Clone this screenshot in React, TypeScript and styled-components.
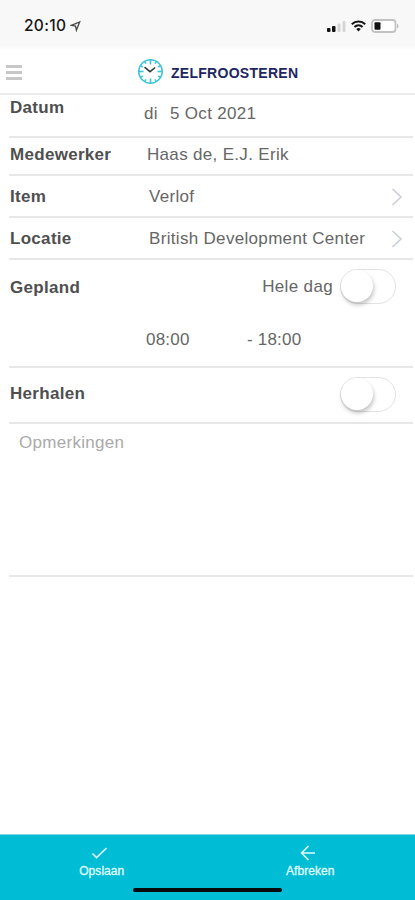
import React from "react";
import styled, { createGlobalStyle } from "styled-components";

const Global = createGlobalStyle`
  * { box-sizing: border-box; }
  body { margin: 0; background: #fff; font-family: "Liberation Sans", Arial, sans-serif; }
`;

const Screen = styled.main`
  width: 100%;
  max-width: 415px;
  height: 900px;
  display: flex;
  flex-direction: column;
  background: #fff;
  overflow: hidden;
`;

const StatusBar = styled.div`
  height: 50px;
  flex: none;
  display: flex;
  justify-content: space-between;
  align-items: center;
  padding: 1px 16px 0 24px;
  background: linear-gradient(#f8f8f8 46px, #fff);
`;

const Clock = styled.div`
  display: flex;
  align-items: center;
  gap: 4px;
  font: 500 15.5px Inter, sans-serif;
  letter-spacing: 0.3px;
  color: #151515;
`;

const Indicators = styled.div`
  display: flex;
  align-items: center;
  gap: 5px;
`;

const Header = styled.header`
  height: 45px;
  flex: none;
  display: grid;
  grid-template-columns: 130px 1fr;
  align-items: center;
  padding-left: 6px;
  border-bottom: 2px solid #ececec;
`;

const MenuButton = styled.button`
  width: 16px;
  height: 15px;
  margin-top: 1px;
  padding: 0;
  border: 0;
  background: none;
  display: flex;
  flex-direction: column;
  justify-content: space-between;
`;

const MenuLine = styled.span`
  height: 3px;
  width: 100%;
  background: #c8c8c8;
`;

const Brand = styled.div`
  display: flex;
  align-items: center;
  gap: 7px;
  padding-left: 1px;
`;

const Title = styled.h1`
  margin: 2px 0 0;
  font-size: 14px;
  line-height: 18px;
  letter-spacing: 0.28px;
  color: #20265f;
`;

const Form = styled.section`
  margin: 0 2px 0 9px;
  flex: 1;
`;

const Row = styled.div<{ $height: number; $drop?: number; $end?: number }>`
  height: ${(p) => p.$height}px;
  display: flex;
  align-items: center;
  padding: ${(p) => p.$drop ?? 0}px ${(p) => p.$end ?? 10}px 0 0;
  border-bottom: 2px solid #e7e7e7;
`;

const Label = styled.span<{ $lift?: number }>`
  width: 135px;
  flex: none;
  padding-left: 1px;
  padding-bottom: ${(p) => p.$lift ?? 0}px;
  font-size: 17px;
  line-height: 20px;
  font-weight: 700;
  letter-spacing: 0.3px;
  color: #4f4f4f;
`;

const Value = styled.span<{ $indent?: number; $lift?: number }>`
  flex: 1;
  padding-left: ${(p) => p.$indent ?? 0}px;
  padding-bottom: ${(p) => p.$lift ?? 0}px;
  font-size: 17px;
  line-height: 20px;
  letter-spacing: 0.32px;
  white-space: pre;
  color: #666;
`;

const Weekday = styled.span`
  margin-right: 2px;
`;

const Planned = styled.div`
  height: 108px;
  border-bottom: 2px solid #e7e7e7;
`;

const PlannedTop = styled.div`
  height: 55px;
  display: flex;
  align-items: center;
  padding-right: 17px;
`;

const AllDay = styled.span`
  margin: 0 7px 2px auto;
  font-size: 17px;
  line-height: 20px;
  letter-spacing: 0.35px;
  color: #666;
`;

const Times = styled.div`
  display: grid;
  grid-template-columns: 101px 1fr;
  padding: 15px 0 0 137px;
  font-size: 17px;
  line-height: 20px;
  letter-spacing: 0.2px;
  color: #666;
`;

const Toggle = styled.span`
  width: 56px;
  height: 35px;
  flex: none;
  margin: 0 0 2px auto;
  display: flex;
  border: 1.5px solid #e2e2e2;
  border-radius: 18px;
  background: #fff;
  ${AllDay} + & { margin-left: 0; }
`;

const Knob = styled.span`
  width: 32px;
  height: 32px;
  border-radius: 50%;
  background: #fff;
  box-shadow: 1px 3px 4px rgba(0, 0, 0, 0.23);
`;

const Notes = styled.div`
  height: 153px;
  padding: 9px 10px;
  border-bottom: 2px solid #e7e7e7;
  font-size: 17px;
  line-height: 20px;
  letter-spacing: 0.3px;
  color: #aaa;
`;

const Footer = styled.footer`
  height: 66px;
  flex: none;
  display: grid;
  grid-template-columns: 1fr 1fr;
  grid-template-rows: 53px 5px;
  border-top: 1px solid #7edce7;
  background: #00bdd5;
`;

const Action = styled.button<{ $trim: number }>`
  display: flex;
  flex-direction: column;
  align-items: center;
  padding: 7px ${(p) => p.$trim}px 0 0;
  border: 0;
  background: none;
  color: #e0fbfd;
  font: 12px/16px "Liberation Sans", Arial, sans-serif;
  letter-spacing: 0.05px;
  -webkit-text-stroke: 0.3px #e0fbfd;
`;

const ActionIcon = styled.span<{ $offset: number }>`
  height: 21px;
  display: flex;
  align-items: center;
  margin-right: ${(p) => p.$offset}px;
`;

const HomeIndicator = styled.div`
  grid-column: 1 / -1;
  justify-self: center;
  width: 149px;
  height: 4px;
  border-radius: 2px;
  background: #07090a;
`;

const Chevron = () => (
  <svg width="12" height="18" viewBox="0 0 12 18" fill="none" stroke="#c9cdd8" strokeWidth="1.5">
    <path d="M1.5 1 10 9l-8.500 8" />
  </svg>
);

const Switch = () => (
  <Toggle role="switch" aria-checked={false}>
    <Knob />
  </Toggle>
);

const ClockLogo = () => (
  <svg width="27" height="27" viewBox="0 0 27 27" fill="none">
    <circle cx="13.500" cy="13.500" r="11.700" stroke="#3cc4d8" strokeWidth="1.600" />
    <g stroke="#3cc4d8" strokeWidth="1.600">
      {Array.from({ length: 12 }, (_, i) => (
        <path key={i} d={i % 3 ? "M13.500 2v2.500" : "M13.500 2v4.500"} transform={`rotate(${i * 30} 13.500 13.500)`} />
      ))}
    </g>
    <path d="M7.500 9.200 13 13.700l5.200-4.200" stroke="#303940" strokeWidth="1.500" />
  </svg>
);

export default function App() {
  return (
    <>
      <Global />
      <Screen>
        <StatusBar>
          <Clock>
            20:10
            <svg width="11" height="12" viewBox="0 0 12 12" fill="none" stroke="#4b4b4b" strokeWidth="1.500">
              <path d="M1.500 5.200 10.500 1.500 7 10.500 6 6Z" />
            </svg>
          </Clock>
          <Indicators>
            <svg width="20" height="14" viewBox="0 0 20 14">
              <rect x="1" y="9" width="3.500" height="4" rx="1" fill="#111" />
              <rect x="6" y="7" width="3.500" height="6" rx="1" fill="#111" />
              <rect x="11.500" y="4.500" width="3" height="8.500" rx="1" fill="#d5d5d5" />
              <rect x="16.500" y="2" width="3" height="11" rx="1" fill="#d5d5d5" />
            </svg>
            <svg width="15" height="12" viewBox="0 0 15 12" fill="none" stroke="#161616" strokeWidth="2.100">
              <path d="M.8 4.200a9.700 9.700 0 0 1 13.400 0M3.400 7a6 6 0 0 1 8.200 0" />
              <path d="m5.200 9 2.300 2.500L9.800 9a3.300 3.300 0 0 0-4.600 0Z" fill="#161616" stroke="none" />
            </svg>
            <svg width="28" height="14" viewBox="0 0 28 14">
              <rect x="1" y="1" width="23.500" height="12" rx="3" fill="#fff" stroke="#c2c2c2" strokeWidth="1.800" />
              <rect x="3.500" y="3.200" width="6" height="7.600" rx="1" fill="#111" />
              <path d="M26 4.500v5q1.500-1 1.500-2.500T26 4.500" fill="#bbb" />
            </svg>
          </Indicators>
        </StatusBar>
        <Header>
          <MenuButton aria-label="Menu">
            <MenuLine />
            <MenuLine />
            <MenuLine />
          </MenuButton>
          <Brand>
            <ClockLogo />
            <Title>ZELFROOSTEREN</Title>
          </Brand>
        </Header>
        <Form>
          <Row $height={43}>
            <Label $lift={15}>Datum</Label>
            <Value $lift={3}>
              <Weekday>di</Weekday>{"  "}5 Oct 2021
            </Value>
          </Row>
          <Row $height={38}>
            <Label $lift={2}>Medewerker</Label>
            <Value $indent={3} $lift={2}>Haas de, E.J. Erik</Value>
          </Row>
          <Row $height={42} $drop={2}>
            <Label>Item</Label>
            <Value $indent={5}>Verlof</Value>
            <Chevron />
          </Row>
          <Row $height={42} $drop={2}>
            <Label>Locatie</Label>
            <Value $indent={5}>British Development Center</Value>
            <Chevron />
          </Row>
          <Planned>
            <PlannedTop>
              <Label>Gepland</Label>
              <AllDay>Hele dag</AllDay>
              <Switch />
            </PlannedTop>
            <Times>
              <span>08:00</span>
              <span>- 18:00</span>
            </Times>
          </Planned>
          <Row $height={56} $end={17}>
            <Label $lift={3}>Herhalen</Label>
            <Switch />
          </Row>
          <Notes>Opmerkingen</Notes>
        </Form>
        <Footer>
          <Action $trim={4}>
            <ActionIcon $offset={5}>
              <svg width="17" height="14" viewBox="0 0 17 14" fill="none" stroke="currentColor" strokeWidth="1.700">
                <path d="m1.500 7.500 4 4L15.500 2" />
              </svg>
            </ActionIcon>
            Opslaan
          </Action>
          <Action $trim={2}>
            <ActionIcon $offset={4}>
              <svg width="16" height="16" viewBox="0 0 16 16" fill="none" stroke="currentColor" strokeWidth="1.600">
                <path d="M15 8H1.500M8.500 1 1.500 8l7 7" />
              </svg>
            </ActionIcon>
            Afbreken
          </Action>
          <HomeIndicator />
        </Footer>
      </Screen>
    </>
  );
}
